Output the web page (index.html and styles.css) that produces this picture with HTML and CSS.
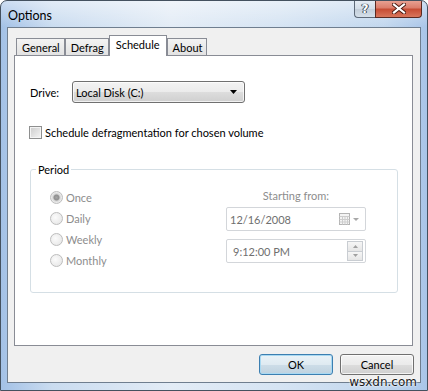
FILE: index.html
```html
<!DOCTYPE html>
<html>
<head>
<meta charset="utf-8">
<link rel="stylesheet" href="styles.css">
</head>
<body>
<div class="window">
  <div class="titlebar">
    <span class="title">Options</span>
    <div class="caption">
      <div class="cap help"><span>?</span></div>
      <div class="cap close">
        <svg width="14" height="11" viewBox="0 0 14 11">
          <path d="M2 1.5 L12 9.5 M12 1.5 L2 9.5" stroke="#4a1a12" stroke-width="4" stroke-linecap="square" fill="none"/>
          <path d="M2 1.5 L12 9.5 M12 1.5 L2 9.5" stroke="#ffffff" stroke-width="2.2" stroke-linecap="square" fill="none"/>
        </svg>
      </div>
    </div>
  </div>
  <div class="client">
    <div class="tabs">
      <div class="tab">General</div>
      <div class="tab">Defrag</div>
      <div class="tab active">Schedule</div>
      <div class="tab">About</div>
    </div>
    <div class="panel">
      <div class="drive-row">
        <span class="drive-label">Drive:</span>
        <div class="combo">
          <span>Local Disk (C:)</span>
          <svg class="combo-arrow" width="7" height="4" viewBox="0 0 7 4"><path d="M0 0 H7 L3.5 4 Z" fill="#000"/></svg>
        </div>
      </div>
      <div class="check-row">
        <span class="checkbox"></span>
        <span>Schedule defragmentation for chosen volume</span>
      </div>
      <fieldset class="period">
        <legend>Period</legend>
        <div class="period-body">
          <div class="radios">
            <div class="radio-row"><span class="radio checked"></span><span>Once</span></div>
            <div class="radio-row"><span class="radio"></span><span>Daily</span></div>
            <div class="radio-row"><span class="radio"></span><span>Weekly</span></div>
            <div class="radio-row"><span class="radio"></span><span>Monthly</span></div>
          </div>
          <div class="start">
            <div class="start-label">Starting from:</div>
            <div class="field date">
              <span>12/16/2008</span>
              <span class="date-tools">
                <svg width="11" height="12" viewBox="0 0 11 12">
                  <rect x="0.5" y="0.5" width="10" height="11" fill="#f4f4f4" stroke="#b4b4b4"/>
                  <path d="M0.5 3.5 H10.5 M0.5 6.5 H10.5 M0.5 9 H10.5 M3.5 3.5 V11.5 M6 3.5 V11.5 M8.5 3.5 V11.5" stroke="#cdcdcd" stroke-width="1" fill="none"/>
                </svg>
                <svg width="6" height="3" viewBox="0 0 6 3"><path d="M0 0 H6 L3 3 Z" fill="#a8a8a8"/></svg>
              </span>
            </div>
            <div class="field time">
              <span>9:12:00 PM</span>
              <span class="spinner">
                <span class="spin"><svg width="5" height="3" viewBox="0 0 5 3"><path d="M0 3 H5 L2.5 0 Z" fill="#a0a0a0"/></svg></span>
                <span class="spin"><svg width="5" height="3" viewBox="0 0 5 3"><path d="M0 0 H5 L2.5 3 Z" fill="#a0a0a0"/></svg></span>
              </span>
            </div>
          </div>
        </div>
      </fieldset>
    </div>
    <div class="buttons">
      <button class="btn default">OK</button>
      <button class="btn">Cancel</button>
    </div>
  </div>
  <div class="watermark">wsxdn.com</div>
</div>
</body>
</html>
```

FILE: styles.css
```css
body {
  margin: 0;
  font-family: "Lato", "Noto Sans", sans-serif;
  font-size: 11px;
  color: #000;
}

.window {
  position: relative;
  width: 428px;
  height: 391px;
  box-sizing: border-box;
  border: 1px solid #44515f;
  border-radius: 7px 7px 0 0;
  padding: 0 6px 7px;
  display: flex;
  flex-direction: column;
  overflow: hidden;
  background:
    linear-gradient(180deg, rgba(255,255,255,0.45), rgba(255,255,255,0) 26px),
    linear-gradient(90deg, #a3c1e6 0%, #cadcf0 12%, #e3ecf6 40%, #d6e4f3 65%, #c2d7ee 90%, #a9c5e8 100%);
}

.titlebar {
  height: 26px;
  display: flex;
  align-items: flex-start;
}

.title {
  align-self: center;
  margin-left: 1px;
  margin-top: 2px;
  font-size: 12.5px;
}

.caption {
  margin-left: auto;
  margin-top: -1px;
  margin-right: -1px;
  display: flex;
}

.cap {
  height: 18px;
  box-sizing: border-box;
  border: 1px solid #5d6978;
  border-top: none;
  display: flex;
  align-items: center;
  justify-content: center;
}

.help {
  width: 21px;
  border-right: none;
  border-radius: 0 0 0 4px;
  background: linear-gradient(180deg, #e6edf5 0%, #d3dde8 50%, #c1ccd8 51%, #d5e0ea 100%);
  font-family: "DejaVu Sans", sans-serif;
  font-size: 12px;
  font-weight: bold;
  color: #fff;
  text-shadow: 0 0 1px #3c4a5a, 0 0 1px #3c4a5a, 1px 0 0 #3c4a5a, -1px 0 0 #3c4a5a;
}

.close {
  width: 47px;
  border-color: #5a2a22;
  border-radius: 0 0 4px 0;
  background: linear-gradient(180deg, #eaa597 0%, #dc7e6c 45%, #c74d35 55%, #d8765c 100%);
}

.client {
  flex: 1;
  border: 1px solid #6f7e8f;
  background: #f0f0f0;
  padding: 7px 7px 0 6px;
  display: flex;
  flex-direction: column;
}

.tabs {
  height: 20px;
  display: flex;
  align-items: flex-end;
  padding-left: 2px;
}

.tab {
  height: 17px;
  box-sizing: border-box;
  padding: 0 4px 0 5px;
  border: 1px solid #898c95;
  border-bottom: none;
  background: linear-gradient(180deg, #f3f3f3, #e2e2e2);
  line-height: 17px;
  text-align: center;
}

.tab.active {
  height: 21px;
  margin-bottom: -1px;
  position: relative;
  z-index: 1;
  background: #fff;
  line-height: 17px;
  padding: 0 6px;
}

.panel {
  height: 291px;
  box-sizing: border-box;
  border: 1px solid #898c95;
  background: #fff;
}

.drive-row {
  margin-top: 25px;
  padding-left: 15px;
  display: flex;
  align-items: center;
}

.drive-label {
  width: 42px;
}

.combo {
  width: 173px;
  height: 22px;
  box-sizing: border-box;
  border: 1px solid #707070;
  border-radius: 3px;
  background: linear-gradient(180deg, #f3f3f3 0%, #ebebeb 50%, #dddddd 51%, #cfcfcf 100%);
  box-shadow: inset 0 0 0 1px rgba(255,255,255,0.7);
  display: flex;
  align-items: center;
  padding: 0 4px 0 3px;
}

.combo-arrow {
  margin-left: auto;
  margin-right: 3px;
}

.check-row {
  margin-top: 23px;
  padding-left: 14px;
  height: 13px;
  display: flex;
  align-items: center;
  gap: 3px;
}

.checkbox {
  width: 13px;
  height: 13px;
  box-sizing: border-box;
  border: 1px solid #8e8f8f;
  background: linear-gradient(135deg, #cbcbcb, #f5f5f5);
  box-shadow: inset 0 0 0 1px #f4f4f4;
}

.period {
  margin: 23px 0 0 15px;
  width: 368px;
  height: 131px;
  box-sizing: border-box;
  border: 1px solid #d5dfe5;
  border-radius: 3px;
  padding: 0;
  min-width: 0;
}

.period legend {
  margin-left: 5px;
  padding: 0 2px;
  line-height: 15px;
}

.period-body {
  display: flex;
  justify-content: space-between;
  padding: 10px 31px 0 19px;
}

.radios {
  display: flex;
  flex-direction: column;
}

.radio-row {
  height: 21px;
  display: flex;
  align-items: center;
  gap: 3px;
  color: #8d8d8d;
}

.radio {
  width: 13px;
  height: 13px;
  box-sizing: border-box;
  border-radius: 50%;
  border: 1px solid #bdbdbd;
  background: radial-gradient(circle at 40% 40%, #fbfbfb, #e3e3e3);
}

.radio.checked {
  background:
    radial-gradient(circle, #a5a5a5 0, #909090 2.5px, #d4d4d4 3.5px, #eaeaea 5px);
}

.start {
  width: 140px;
  display: flex;
  flex-direction: column;
  align-items: stretch;
}

.start-label {
  text-align: center;
  color: #8d8d8d;
  height: 15px;
  line-height: 15px;
  margin-top: 1px;
  margin-bottom: 4px;
}

.field {
  height: 24px;
  box-sizing: border-box;
  border: 1px solid #d3d6da;
  border-radius: 2px;
  background: #fff;
  display: flex;
  align-items: center;
  color: #6f6f6f;
}

.date {
  padding: 0 6px 0 3px;
}

.date-tools {
  margin-left: auto;
  display: flex;
  align-items: center;
  gap: 3px;
}

.time {
  margin-top: 8px;
  padding: 0 2px 0 6px;
}

.spinner {
  margin-left: auto;
  width: 16px;
  height: 20px;
  display: flex;
  flex-direction: column;
}

.spin {
  flex: 1;
  box-sizing: border-box;
  border: 1px solid #c9cdd2;
  background: linear-gradient(180deg, #f6f6f6, #e6e6e6);
  display: flex;
  align-items: center;
  justify-content: center;
}

.spin + .spin {
  border-top: none;
}

.buttons {
  margin-top: 8px;
  margin-right: -1px;
  display: flex;
  justify-content: flex-end;
  gap: 7px;
}

.btn {
  width: 74px;
  height: 21px;
  box-sizing: border-box;
  border: 1px solid #707070;
  border-radius: 3px;
  background: linear-gradient(180deg, #f3f3f3 0%, #ebebeb 50%, #dddddd 51%, #cfcfcf 100%);
  box-shadow: inset 0 0 0 1px rgba(255,255,255,0.75);
  font-family: inherit;
  font-size: 11px;
  color: #000;
  padding: 0;
}

.btn.default {
  border-color: #3c7fb1;
  background: linear-gradient(180deg, #eaf3f8 0%, #dfeaf1 50%, #cddde8 51%, #bfd2df 100%);
  box-shadow: inset 0 0 0 1px #a9d9f2;
}

.watermark {
  position: absolute;
  right: 10px;
  bottom: 1px;
  font-family: "DejaVu Sans", sans-serif;
  font-size: 12px;
  color: #1a1a1a;
  text-shadow: 0 0 2px #fff, 0 0 2px #fff;
}
```
